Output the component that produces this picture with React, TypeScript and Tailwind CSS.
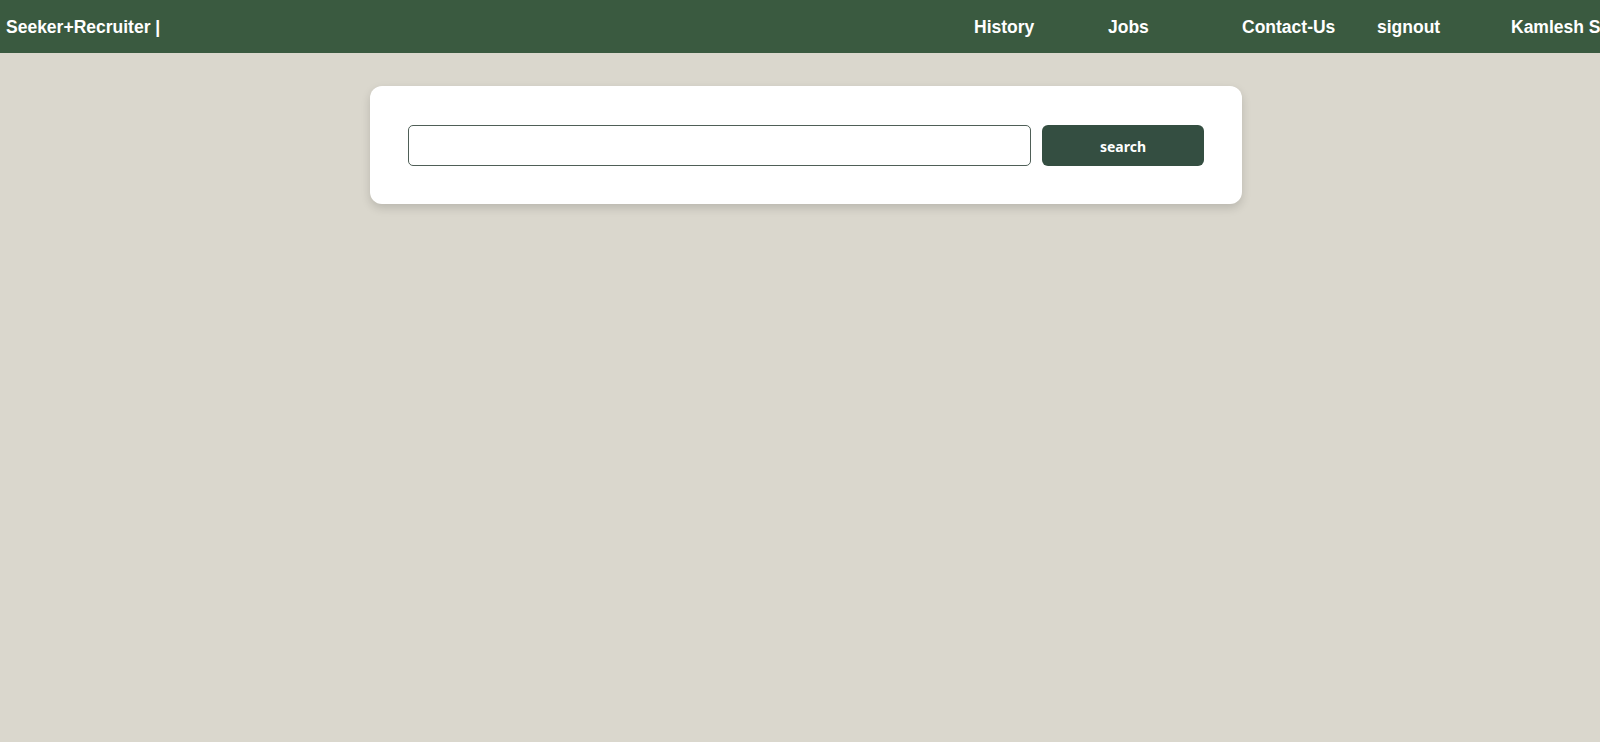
export default function App() {
  return (
    <div className="min-h-screen bg-[#dad7cd] font-['Liberation_Sans',Arial,sans-serif] overflow-hidden">
      {/* Navbar */}
      <nav className="flex h-[53px] items-center bg-[#3a5a40] pt-[2px] text-white">
        <div className="pl-[6px] text-[17.5px] font-bold whitespace-nowrap">Seeker+Recruiter |</div>
        <ul className="ml-auto flex items-center pl-0 text-[17.5px] font-bold whitespace-nowrap">
          <li className="w-[134px]">History</li>
          <li className="w-[134px]">Jobs</li>
          <li className="w-[135px]">Contact-Us</li>
          <li className="w-[134px]">signout</li>
          <li className="w-[89px] overflow-hidden">Kamlesh S</li>
        </ul>
      </nav>

      {/* Search card */}
      <div className="flex justify-center pl-3 pt-[33px]">
        <div className="w-[872px] rounded-xl bg-white px-[38px] pt-[39px] pb-[38px] shadow-[0_4px_10px_rgba(0,0,0,0.15)]">
          <div className="flex gap-[11px]">
            <input
              type="text"
              className="h-[41px] flex-1 rounded-[5px] border border-[#4f5f57] bg-white px-3 outline-none"
            />
            <button className="h-[41px] w-[162px] rounded-[6px] bg-[#344e41] pt-[2px] text-[14px] font-bold text-white font-['Noto_Sans',sans-serif]">
              search
            </button>
          </div>
        </div>
      </div>
    </div>
  )
}
